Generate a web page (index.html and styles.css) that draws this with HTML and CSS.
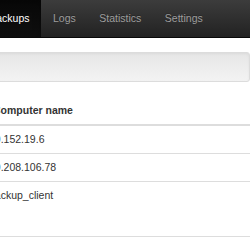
FILE: index.html
```html
<!DOCTYPE html>
<html lang="en">
<head>
    <meta charset="UTF-8">
    <meta name="viewport" content="width=device-width, initial-scale=1.0">
    <title>Backups</title>
    <link rel="stylesheet" href="styles.css">
</head>
<body>
    <nav class="navbar">
        <ul class="nav">
            <li class="nav-item active"><a href="#">Backups</a></li>
            <li class="nav-item"><a href="#">Logs</a></li>
            <li class="nav-item"><a href="#">Statistics</a></li>
            <li class="nav-item"><a href="#">Settings</a></li>
        </ul>
    </nav>

    <div class="content">
        <div class="well"></div>

        <table class="table">
            <thead>
                <tr>
                    <th>Computer name</th>
                </tr>
            </thead>
            <tbody>
                <tr>
                    <td>10.152.19.6</td>
                </tr>
                <tr>
                    <td>10.208.106.78</td>
                </tr>
                <tr class="tall-row">
                    <td>backup_client</td>
                </tr>
                <tr>
                    <td></td>
                </tr>
            </tbody>
        </table>
    </div>
</body>
</html>
```

FILE: styles.css
```css
body {
    margin: 0;
    background-color: #fff;
    font-family: 'Liberation Sans', Arial, sans-serif;
    font-size: 10.5px;
    line-height: 15px;
    color: #333;
    overflow: hidden;
}

/* top bar */
.navbar {
    height: 37px;
    background: linear-gradient(to bottom, #3c3c3c 0%, #222 100%);
    border-bottom: 1px solid #080808;
    margin-bottom: 14px;
}

.nav {
    display: flex;
    margin: 0 0 0 -22.5px;
    padding: 0;
    list-style: none;
    height: 100%;
}

.nav-item a {
    display: block;
    padding: 11px 11.75px;
    color: #9d9d9d;
    text-decoration: none;
    text-shadow: 0 -1px 0 rgba(0, 0, 0, 0.25);
}

.nav-item.active a {
    height: 15px;
    color: #fff;
    background: linear-gradient(to bottom, #080808 0%, #0f0f0f 100%);
    box-shadow: inset 0 3px 9px rgba(0, 0, 0, 0.25);
}

/* page body */
.content {
    margin-left: -17px;
}

.well {
    height: 28px;
    margin-bottom: 15px;
    background: linear-gradient(to bottom, #e6e6e6 0%, #f3f3f3 100%);
    border: 1px solid #dcdcdc;
    border-radius: 3px;
    box-shadow: inset 0 1px 3px rgba(0, 0, 0, 0.05), 0 1px 0 rgba(255, 255, 255, 0.1);
}

.table {
    width: 300px;
    border-collapse: collapse;
    border-spacing: 0;
}

.table th,
.table td {
    padding: 6px;
    text-align: left;
    vertical-align: top;
    line-height: 15px;
}

.table th {
    padding-left: 10px;
    font-weight: bold;
    border-bottom: 2px solid #ddd;
}

.table td {
    border-top: 1px solid #ddd;
}

.table .tall-row td {
    height: 42px;
}
```
